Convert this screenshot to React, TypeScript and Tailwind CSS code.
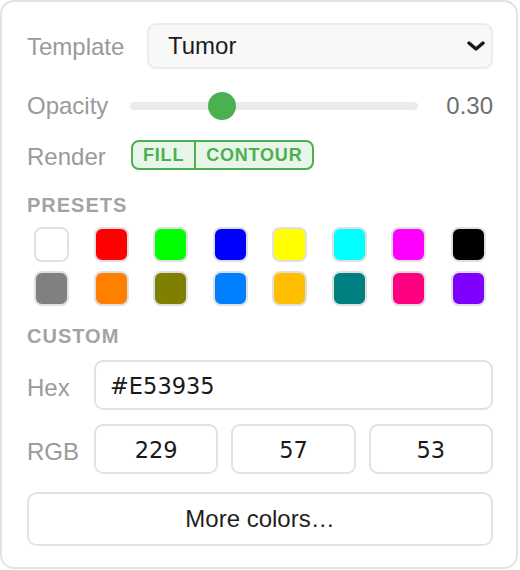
import React from "react";

const row1 = ["#ffffff", "#ff0000", "#00ff00", "#0000ff", "#ffff00", "#00ffff", "#ff00ff", "#000000"];
const row2 = ["#808080", "#ff8000", "#808000", "#0080ff", "#ffbf00", "#008080", "#ff0080", "#8000ff"];

function Swatch({ color }: { color: string }) {
  return (
    <div
      className="w-[35px] h-[35px] rounded-[8px] border-2 border-[#e0e0e0]"
      style={{ backgroundColor: color }}
    />
  );
}

export default function App() {
  const opacity = 0.3;
  const trackW = 288;
  const thumb = 28;
  return (
    <div className="w-[520px] h-[570px] bg-white">
      <div className="w-[518px] h-[569px] border-2 border-[#e3e3e3] rounded-[14px] pl-[25px] pr-[23px] pt-[21px] font-['Liberation_Sans',Arial,sans-serif]">
        {/* Template */}
        <div className="flex items-center h-[46px]">
          <div className="w-[120px] pt-[1px] text-[24px] text-[#9a9a9a] leading-none">Template</div>
          <div className="flex-1 h-full flex items-center justify-between border-2 border-[#ececec] bg-[#f8f8f8] rounded-[9px] pl-[19px] pr-[6px]">
            <span className="text-[24px] text-[#1c1c1c] leading-none">Tumor</span>
            <svg width="18" height="10" viewBox="0 0 18 10">
              <polyline points="2,2 9,8 16,2" fill="none" stroke="#1a1a1a" strokeWidth="3.4" strokeLinecap="round" strokeLinejoin="round" />
            </svg>
          </div>
        </div>

        {/* Opacity */}
        <div className="mt-[22px] flex items-center h-[29px]">
          <div className="w-[103px] text-[24px] text-[#9a9a9a] leading-none">Opacity</div>
          <div className="relative w-[288px] h-[8px] rounded-full bg-[#ebebeb]">
            <div
              className="absolute top-1/2 -translate-y-1/2 w-[28px] h-[28px] rounded-full bg-[#4caf50]"
              style={{ left: `${opacity * (trackW - thumb)}px` }}
            />
          </div>
          <div className="flex-1 text-right text-[24px] text-[#6e6e6e] leading-none">0.30</div>
        </div>

        {/* Render */}
        <div className="mt-[20px] flex items-center h-[30px]">
          <div className="w-[104px] pt-[3px] text-[24px] text-[#9a9a9a] leading-none">Render</div>
          <div className="flex h-[30px] border-2 border-[#4caf50] rounded-[8px] bg-[#e8f5e9] overflow-hidden">
            <div className="flex items-center px-[10px] border-r-2 border-[#4caf50] text-[18px] font-bold tracking-[0.8px] text-[#4caf50] leading-none">FILL</div>
            <div className="flex items-center px-[10px] text-[18px] font-bold tracking-[0.8px] text-[#4caf50] leading-none">CONTOUR</div>
          </div>
        </div>

        {/* Presets */}
        <div className="mt-[25px] h-[20px] text-[20px] leading-[20px] font-bold tracking-[1px] text-[#a3a3a3]">PRESETS</div>
        <div className="mt-[12px] px-[7px] flex flex-col gap-[9px]">
          <div className="flex justify-between">
            {row1.map((c) => (
              <Swatch key={c} color={c} />
            ))}
          </div>
          <div className="flex justify-between">
            {row2.map((c) => (
              <Swatch key={c} color={c} />
            ))}
          </div>
        </div>

        {/* Custom */}
        <div className="mt-[20px] h-[20px] text-[20px] leading-[20px] font-bold tracking-[1px] text-[#a3a3a3]">CUSTOM</div>
        <div className="mt-[14px] flex items-center h-[50px]">
          <div className="w-[67px] pt-[6px] text-[24px] text-[#9a9a9a] leading-none">Hex</div>
          <input
            readOnly
            value="#E53935"
            className="flex-1 min-w-0 h-full border-2 border-[#e2e2e2] rounded-[9px] pl-[14px] pt-[1px] text-[22.5px] text-[#1a1a1a] font-['DejaVu_Sans',sans-serif] outline-none bg-white"
          />
        </div>
        <div className="mt-[14px] flex items-center h-[50px]">
          <div className="w-[67px] pt-[6px] text-[24px] text-[#9a9a9a] leading-none">RGB</div>
          <div className="flex-1 flex gap-[13px] h-full">
            {["229", "57", "53"].map((v) => (
              <input
                key={v}
                readOnly
                value={v}
                className="flex-1 min-w-0 w-full h-full border-2 border-[#e2e2e2] rounded-[9px] pt-[1px] text-center text-[22.5px] text-[#1a1a1a] font-['DejaVu_Sans',sans-serif] outline-none bg-white"
              />
            ))}
          </div>
        </div>

        {/* More colors */}
        <button className="mt-[18px] w-full h-[54px] border-2 border-[#e2e2e2] rounded-[10px] bg-white text-[24px] text-[#1f1f1f] leading-none">
          More colors…
        </button>
      </div>
    </div>
  );
}
